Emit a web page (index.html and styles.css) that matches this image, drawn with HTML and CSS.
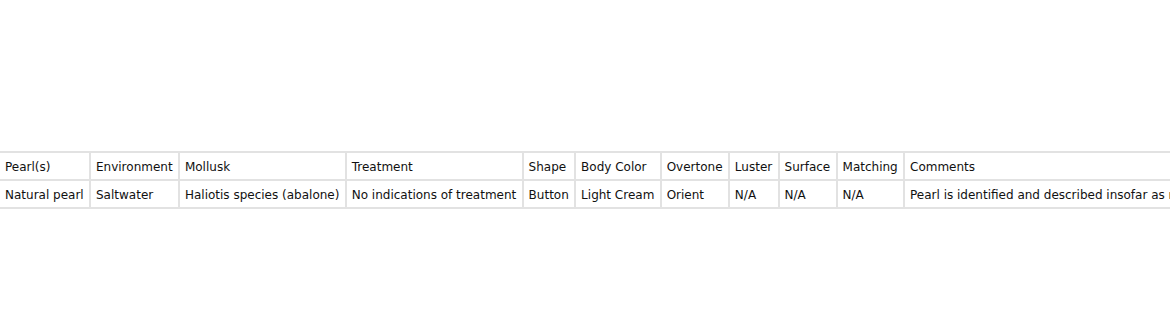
FILE: index.html
```html
<!DOCTYPE html>
<html lang="en">
<head>
    <meta charset="UTF-8">
    <meta name="viewport" content="width=device-width, initial-scale=1.0">
    <title>Pearl Report</title>
    <link rel="stylesheet" href="styles.css">
</head>
<body>
    <div class="report">
        <table class="pearl-table">
            <tr>
                <td>Pearl(s)</td>
                <td>Environment</td>
                <td>Mollusk</td>
                <td>Treatment</td>
                <td>Shape</td>
                <td>Body Color</td>
                <td>Overtone</td>
                <td>Luster</td>
                <td>Surface</td>
                <td>Matching</td>
                <td>Comments</td>
            </tr>
            <tr>
                <td>Natural pearl</td>
                <td>Saltwater</td>
                <td>Haliotis species (abalone)</td>
                <td>No indications of treatment</td>
                <td>Button</td>
                <td>Light Cream</td>
                <td>Orient</td>
                <td>N/A</td>
                <td>N/A</td>
                <td>N/A</td>
                <td>Pearl is identified and described insofar as mounting permits examination.</td>
            </tr>
        </table>
    </div>
</body>
</html>
```

FILE: styles.css
```css
body, html {
    margin: 0;
    padding: 0;
    background: #fff;
    overflow: hidden;
}
.report {
    padding-top: 151px;
}
.pearl-table {
    border-collapse: collapse;
    font-family: "DejaVu Sans", Verdana, sans-serif;
    font-size: 12px;
    color: #111;
    white-space: nowrap;
}
.pearl-table td {
    border: 2px solid #e2e2e2;
    padding: 7px 5.3px 5px 5px;
    text-align: left;
}
.pearl-table tr td:first-child {
    border-left: none;
}
```
